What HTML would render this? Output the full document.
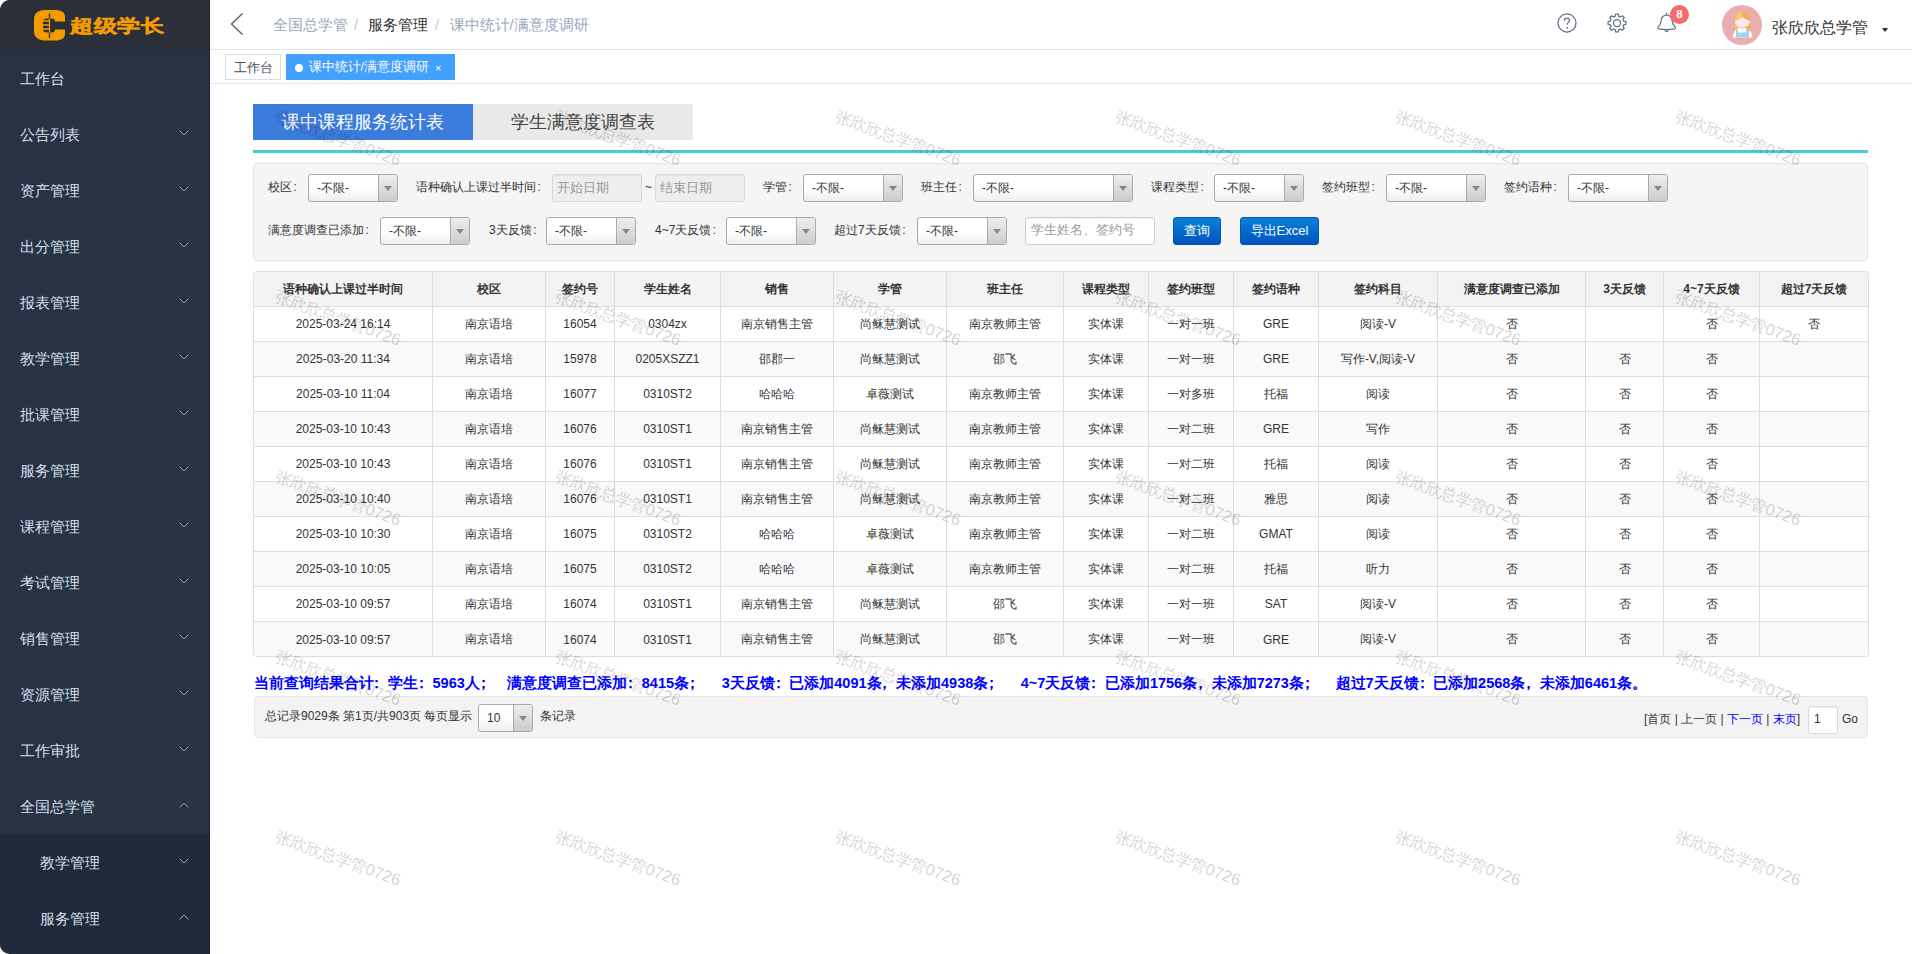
<!DOCTYPE html>
<html><head><meta charset="utf-8">
<style>
*{box-sizing:border-box;margin:0;padding:0}
html,body{width:1912px;height:954px;overflow:hidden;background:#fff;font-family:"Liberation Sans",sans-serif;color:#333;position:relative}
.abs{position:absolute}
.bc{top:16px;font-size:14.5px;line-height:18px;white-space:nowrap}
#side{position:absolute;left:0;top:0;width:210px;height:954px;background:#263345;border-radius:10px 0 0 10px;overflow:hidden}
#logo{position:absolute;left:0;top:0;width:210px;height:50px;background:#2b2f3a}
.mi{position:absolute;left:0;width:210px;height:56px;line-height:58px;font-size:14.5px;color:#d6dee8;padding-left:20px}
.mi.sub{padding-left:40px}
.chev{position:absolute;left:179px;top:24px;width:10px;height:6px}
#sub{position:absolute;left:0;top:834px;width:210px;height:120px;background:#1f2a3a}
#hdr{position:absolute;left:210px;top:0;width:1702px;height:50px;border-bottom:1px solid #e6e6e6;background:#fff}
#tags{position:absolute;left:210px;top:50px;width:1702px;height:34px;border-bottom:1px solid #e6e6e6;background:#fff}
.tag{position:absolute;top:4px;height:26px;line-height:24px;font-size:12px;white-space:nowrap;border:1px solid #d8dce5;color:#495060;padding:0 8px;background:#fff}
.tag.act{background:#42a0ff;border-color:#42a0ff;color:#fff}
.ttab{position:absolute;top:104px;height:36px;line-height:36px;font-size:18px;text-align:center}
#teal{position:absolute;left:253px;top:150px;width:1615px;height:3px;background:#45ccd6}
#filt{position:absolute;left:253px;top:163px;width:1615px;height:98px;background:#f5f5f5;border:1px solid #e3e3e3;border-radius:4px}
.lb{position:absolute;font-size:12px;color:#333;line-height:14px;white-space:nowrap}
.sel{position:absolute;height:28px;border:1px solid #aaa;border-radius:3px;background:linear-gradient(#fff 50%,#eee);font-size:12px;line-height:26px;color:#333;padding-left:8px;white-space:nowrap}
.sel i{position:absolute;right:0;top:0;width:19px;height:26px;border-left:1px solid #aaa;background:linear-gradient(#eee,#ccc);border-radius:0 3px 3px 0}
.sel i:after{content:"";position:absolute;left:5px;top:11px;border-left:4px solid transparent;border-right:4px solid transparent;border-top:5px solid #888}
.date{position:absolute;height:28px;border:1px solid #d9d9d9;border-radius:3px;background:#eee;font-size:12px;line-height:25px;color:#999;padding-left:4px;box-shadow:inset 0 1px 1px rgba(0,0,0,0.06)}
.btn{position:absolute;top:217px;height:28px;border-radius:3px;background:linear-gradient(#0a82d8,#0053c0);border:1px solid #0058b8;color:#fff;font-size:13px;line-height:26px;text-align:center}
#tw{position:absolute;left:253px;top:271px;width:1616px;height:386px;border:1px solid #ddd;border-radius:4px;overflow:hidden}
table{width:1614px;border-collapse:separate;border-spacing:0;font-size:12px;table-layout:fixed}
tr:last-child td{border-bottom:0}
td:last-child,th:last-child{border-right:0}
td,th{height:35px;border-right:1px solid #ddd;border-bottom:1px solid #ddd;text-align:center;color:#333;white-space:nowrap;overflow:hidden}
th{background:#f3f3f3;font-weight:bold}
tr:nth-child(odd) td{background:#f9f9f9}
.sum{position:absolute;top:675px;font-size:14.5px;font-weight:bold;color:#0000ff;white-space:pre;line-height:16px}
.pc{display:inline-block;width:1em;text-indent:-0.28em}
#pg{position:absolute;left:254px;top:696px;width:1614px;height:42px;background:#f3f3f3;border:1px solid #e5e5e5;border-radius:4px}
.wm{position:absolute;font-size:16.4px;color:rgba(0,0,0,0.19);transform:rotate(19.8deg);transform-origin:0 0;white-space:nowrap;pointer-events:none}
</style></head><body>
<div id="side"><div id="logo">
<svg class="abs" style="left:34px;top:10px" width="32" height="31" viewBox="0 0 32 31">
<path fill="#f39c00" fill-rule="evenodd" d="M11 0 H21 C27 0 31 2 31 7 V11.5 H21 C21 9.5 20 8.5 18 8.5 H13 C10.5 8.5 9 9.5 9 12 V19 C9 21.5 10.5 22.5 13 22.5 H18 C20 22.5 21 21.5 21 19.5 H31 V23.5 C31 28.5 27 30.5 21 30.5 H11 C4 30.5 0 27 0 21 V9.5 C0 3.5 4 0 11 0 Z"/>
<path stroke="#2b2f3a" stroke-width="1.3" fill="none" d="M15.5 3.5 V28 M9 11.5 H15 M9 15.5 H15 M9 19.5 H15"/>
<path stroke="#f39c00" stroke-width="1.3" fill="none" d="M15.5 8.5 V22.5 M9 11 H15.5 M9 15 H15.5 M9 19 H15.5"/>
</svg>
<div class="abs" style="left:70px;top:9.5px;font-size:23.5px;font-weight:bold;color:#f39c00;-webkit-text-stroke:0.6px #f39c00;line-height:32px;letter-spacing:-0.3px;transform:scaleY(0.78);transform-origin:0 50%;white-space:nowrap">超级学长</div>
</div>
<div id="sub"></div>
<div class="mi" style="top:50px">工作台</div>
<div class="mi" style="top:106px">公告列表<svg class="chev" viewBox="0 0 10 6"><path d="M0.5 0.5 L5 5 L9.5 0.5" fill="none" stroke="#909aa8" stroke-width="1"/></svg></div>
<div class="mi" style="top:162px">资产管理<svg class="chev" viewBox="0 0 10 6"><path d="M0.5 0.5 L5 5 L9.5 0.5" fill="none" stroke="#909aa8" stroke-width="1"/></svg></div>
<div class="mi" style="top:218px">出分管理<svg class="chev" viewBox="0 0 10 6"><path d="M0.5 0.5 L5 5 L9.5 0.5" fill="none" stroke="#909aa8" stroke-width="1"/></svg></div>
<div class="mi" style="top:274px">报表管理<svg class="chev" viewBox="0 0 10 6"><path d="M0.5 0.5 L5 5 L9.5 0.5" fill="none" stroke="#909aa8" stroke-width="1"/></svg></div>
<div class="mi" style="top:330px">教学管理<svg class="chev" viewBox="0 0 10 6"><path d="M0.5 0.5 L5 5 L9.5 0.5" fill="none" stroke="#909aa8" stroke-width="1"/></svg></div>
<div class="mi" style="top:386px">批课管理<svg class="chev" viewBox="0 0 10 6"><path d="M0.5 0.5 L5 5 L9.5 0.5" fill="none" stroke="#909aa8" stroke-width="1"/></svg></div>
<div class="mi" style="top:442px">服务管理<svg class="chev" viewBox="0 0 10 6"><path d="M0.5 0.5 L5 5 L9.5 0.5" fill="none" stroke="#909aa8" stroke-width="1"/></svg></div>
<div class="mi" style="top:498px">课程管理<svg class="chev" viewBox="0 0 10 6"><path d="M0.5 0.5 L5 5 L9.5 0.5" fill="none" stroke="#909aa8" stroke-width="1"/></svg></div>
<div class="mi" style="top:554px">考试管理<svg class="chev" viewBox="0 0 10 6"><path d="M0.5 0.5 L5 5 L9.5 0.5" fill="none" stroke="#909aa8" stroke-width="1"/></svg></div>
<div class="mi" style="top:610px">销售管理<svg class="chev" viewBox="0 0 10 6"><path d="M0.5 0.5 L5 5 L9.5 0.5" fill="none" stroke="#909aa8" stroke-width="1"/></svg></div>
<div class="mi" style="top:666px">资源管理<svg class="chev" viewBox="0 0 10 6"><path d="M0.5 0.5 L5 5 L9.5 0.5" fill="none" stroke="#909aa8" stroke-width="1"/></svg></div>
<div class="mi" style="top:722px">工作审批<svg class="chev" viewBox="0 0 10 6"><path d="M0.5 0.5 L5 5 L9.5 0.5" fill="none" stroke="#909aa8" stroke-width="1"/></svg></div>
<div class="mi" style="top:778px">全国总学管<svg class="chev" viewBox="0 0 10 6"><path d="M0.5 5.5 L5 1 L9.5 5.5" fill="none" stroke="#909aa8" stroke-width="1"/></svg></div>
<div class="mi sub" style="top:834px">教学管理<svg class="chev" viewBox="0 0 10 6"><path d="M0.5 0.5 L5 5 L9.5 0.5" fill="none" stroke="#909aa8" stroke-width="1"/></svg></div>
<div class="mi sub" style="top:890px">服务管理<svg class="chev" viewBox="0 0 10 6"><path d="M0.5 5.5 L5 1 L9.5 5.5" fill="none" stroke="#909aa8" stroke-width="1"/></svg></div>
<div style="position:absolute;left:209px;top:0;width:1px;height:954px;background:rgba(0,0,0,0.22)"></div></div>
<div id="hdr">
<svg class="abs" style="left:20px;top:12px" width="14" height="24" viewBox="0 0 14 24"><path d="M12.5 1.5 L1.5 12 L12.5 22.5" fill="none" stroke="#666" stroke-width="1.5"/></svg>
<div class="abs bc" style="left:63px;color:#97a8be">全国总学管</div><div class="abs bc" style="left:144px;color:#c0c4cc">/</div><div class="abs bc" style="left:158px;color:#303133">服务管理</div><div class="abs bc" style="left:225px;color:#c0c4cc">/</div><div class="abs bc" style="left:239.5px;color:#97a8be">课中统计/满意度调研</div>
<svg class="abs" style="left:1346px;top:12px" width="22" height="22" viewBox="0 0 22 22"><circle cx="11" cy="11" r="9" fill="none" stroke="#627180" stroke-width="1.25"/><path d="M8.4 8.7 C8.4 7 9.5 6.1 11 6.1 C12.5 6.1 13.6 7 13.6 8.5 C13.6 10.3 11.1 10.5 11.1 12.7" fill="none" stroke="#627180" stroke-width="1.3"/><circle cx="11.1" cy="15.8" r="0.9" fill="#627180"/></svg>
<svg class="abs" style="left:1396px;top:11.5px" width="22" height="22" viewBox="0 0 22 22"><path fill="none" stroke="#627180" stroke-width="1.25" stroke-linejoin="round" d="M17.67 9.23 L19.89 9.57 L19.89 12.43 L17.67 12.77 A6.9 6.9 0 0 1 16.97 14.46 L18.30 16.27 L16.27 18.30 L14.46 16.97 A6.9 6.9 0 0 1 12.77 17.67 L12.43 19.89 L9.57 19.89 L9.23 17.67 A6.9 6.9 0 0 1 7.54 16.97 L5.73 18.30 L3.70 16.27 L5.03 14.46 A6.9 6.9 0 0 1 4.33 12.77 L2.11 12.43 L2.11 9.57 L4.33 9.23 A6.9 6.9 0 0 1 5.03 7.54 L3.70 5.73 L5.73 3.70 L7.54 5.03 A6.9 6.9 0 0 1 9.23 4.33 L9.57 2.11 L12.43 2.11 L12.77 4.33 A6.9 6.9 0 0 1 14.46 5.03 L16.27 3.70 L18.30 5.73 L16.97 7.54 A6.9 6.9 0 0 1 17.67 9.23 Z"/><circle cx="11" cy="11" r="3.5" fill="none" stroke="#627180" stroke-width="1.25"/></svg>
<svg class="abs" style="left:1446px;top:12px" width="22" height="22" viewBox="0 0 22 22"><path fill="none" stroke="#627180" stroke-width="1.2" stroke-linejoin="round" stroke-linecap="round" d="M10.6 1.2 V3.1 M10.6 3.1 C7.3 3.1 5.1 5.5 5.1 8.8 C5.1 12 3.6 13.4 2.3 14.7 C1.3 15.8 1.9 17 3.6 17.2 C8 17.8 13.3 17.8 17.7 17.2 C19.4 17 20 15.8 19 14.7 C17.7 13.4 16.1 12 16.1 8.8 C16.1 5.5 13.9 3.1 10.6 3.1 Z M9.1 18.4 C9.5 20.1 11.8 20.1 12.2 18.4"/></svg>
<div class="abs" style="left:1460px;top:4.8px;width:19px;height:19px;border-radius:50%;background:#f56c6c;color:#fff;font-size:11.5px;font-weight:bold;text-align:center;line-height:19px">8</div>
<svg class="abs" style="left:1512px;top:5px" width="40" height="40" viewBox="0 0 40 40"><circle cx="20" cy="20" r="20" fill="#ebaeae"/><path d="M12.8 25.2 V14 C12.8 9.5 16 7 20.3 7 C24.6 7 28.2 9.5 28.2 14 V25.2 Z" fill="#f6c670"/><path d="M20.3 7 C24.6 7 28.2 9.5 28.2 14 V25.2 H20.3 Z" fill="#f0ae68"/><path d="M13 16.2 C15 15 18 14.2 20.3 12.3 C22.6 14.2 25.6 15 28 16.2 C28 19.8 24.6 22.6 20.5 22.6 C16.4 22.6 13 19.8 13 16.2 Z" fill="#fbe6e9"/><path d="M10.9 32.6 C10.9 27.5 13.5 24.5 16.5 23.8 H24 C27.5 24.5 30.3 27.5 30.3 32.6 Z" fill="#fff"/><path d="M13.9 32.6 V24.9 L16.5 23.8 H24 L27.1 24.9 V32.6 Z" fill="#a0d3f0"/><path d="M16 23.1 H24 V27.5 H16 Z" fill="#fff"/><path d="M20.3 23.6 V25.6" stroke="#8cc8ea" stroke-width="0.8"/></svg>
<div class="abs" style="left:1562px;top:17px;font-size:16.3px;line-height:20px;color:#303133;white-space:nowrap">张欣欣总学管</div>
<div class="abs" style="left:1671.5px;top:27.8px;width:0;height:0;border-left:3.7px solid transparent;border-right:3.7px solid transparent;border-top:4.5px solid #1f2d3d"></div>
</div>
<div id="tags"><div class="tag" style="left:15px;width:56px;font-size:12.5px;padding-left:8px;line-height:26px">工作台</div><div class="tag act" style="left:76px;width:169px;font-size:12.5px;padding-left:21.5px;line-height:25.5px"><span style="position:absolute;left:8px;top:8.5px;width:8px;height:8px;border-radius:50%;background:#fff"></span>课中统计/满意度调研<span style="position:absolute;left:148px;top:0.5px;font-size:11px">×</span></div></div>
<div class="ttab" style="left:253px;width:220px;background:#3a7bdc;color:#fff">课中课程服务统计表</div>
<div class="ttab" style="left:473px;width:220px;background:#e9e9e9;color:#444">学生满意度调查表</div>
<div id="teal"></div>
<div id="filt"></div>
<div class="lb" style="left:268px;top:180px">校区<span style="margin-left:1.5px">:</span></div>
<div class="sel" style="left:308px;top:174px;width:90px">-不限-<i></i></div>
<div class="lb" style="left:416px;top:180px">语种确认上课过半时间<span style="margin-left:1.5px">:</span></div>
<div class="date" style="left:552px;top:174px;width:90px;font-size:13px">开始日期</div>
<div class="lb" style="left:645px;top:180px">~</div>
<div class="date" style="left:655px;top:174px;width:90px;font-size:13px">结束日期</div>
<div class="lb" style="left:763px;top:180px">学管<span style="margin-left:1.5px">:</span></div>
<div class="sel" style="left:803px;top:174px;width:100px">-不限-<i></i></div>
<div class="lb" style="left:921px;top:180px">班主任<span style="margin-left:1.5px">:</span></div>
<div class="sel" style="left:973px;top:174px;width:160px">-不限-<i></i></div>
<div class="lb" style="left:1151px;top:180px">课程类型<span style="margin-left:1.5px">:</span></div>
<div class="sel" style="left:1214px;top:174px;width:90px">-不限-<i></i></div>
<div class="lb" style="left:1322px;top:180px">签约班型<span style="margin-left:1.5px">:</span></div>
<div class="sel" style="left:1386px;top:174px;width:100px">-不限-<i></i></div>
<div class="lb" style="left:1504px;top:180px">签约语种<span style="margin-left:1.5px">:</span></div>
<div class="sel" style="left:1568px;top:174px;width:100px">-不限-<i></i></div>
<div class="lb" style="left:268px;top:223px">满意度调查已添加<span style="margin-left:1.5px">:</span></div>
<div class="sel" style="left:380px;top:217px;width:90px">-不限-<i></i></div>
<div class="lb" style="left:489px;top:223px">3天反馈<span style="margin-left:1.5px">:</span></div>
<div class="sel" style="left:546px;top:217px;width:90px">-不限-<i></i></div>
<div class="lb" style="left:655px;top:223px">4~7天反馈<span style="margin-left:1.5px">:</span></div>
<div class="sel" style="left:726px;top:217px;width:90px">-不限-<i></i></div>
<div class="lb" style="left:834px;top:223px">超过7天反馈<span style="margin-left:1.5px">:</span></div>
<div class="sel" style="left:917px;top:217px;width:90px">-不限-<i></i></div>
<div class="date" style="left:1025px;top:217px;width:130px;background:#fff;border-color:#ccc;padding-left:5px;font-size:13px;line-height:24px">学生姓名、签约号</div>
<div class="btn" style="left:1173px;width:48px">查询</div>
<div class="btn" style="left:1240px;width:79px">导出Excel</div>
<div id="tw"><table><colgroup><col style="width:179px"><col style="width:113px"><col style="width:69px"><col style="width:106px"><col style="width:113px"><col style="width:113px"><col style="width:117px"><col style="width:85px"><col style="width:85px"><col style="width:85px"><col style="width:119px"><col style="width:148px"><col style="width:78px"><col style="width:96px"><col style="width:108px"></colgroup>
<tr><th>语种确认上课过半时间</th><th>校区</th><th>签约号</th><th>学生姓名</th><th>销售</th><th>学管</th><th>班主任</th><th>课程类型</th><th>签约班型</th><th>签约语种</th><th>签约科目</th><th>满意度调查已添加</th><th>3天反馈</th><th>4~7天反馈</th><th>超过7天反馈</th></tr>
<tr><td>2025-03-24 16:14</td><td>南京语培</td><td>16054</td><td>0304zx</td><td>南京销售主管</td><td>尚稣慧测试</td><td>南京教师主管</td><td>实体课</td><td>一对一班</td><td>GRE</td><td>阅读-V</td><td>否</td><td></td><td>否</td><td>否</td></tr>
<tr><td>2025-03-20 11:34</td><td>南京语培</td><td>15978</td><td>0205XSZZ1</td><td>邵郡一</td><td>尚稣慧测试</td><td>邵飞</td><td>实体课</td><td>一对一班</td><td>GRE</td><td>写作-V,阅读-V</td><td>否</td><td>否</td><td>否</td><td></td></tr>
<tr><td>2025-03-10 11:04</td><td>南京语培</td><td>16077</td><td>0310ST2</td><td>哈哈哈</td><td>卓薇测试</td><td>南京教师主管</td><td>实体课</td><td>一对多班</td><td>托福</td><td>阅读</td><td>否</td><td>否</td><td>否</td><td></td></tr>
<tr><td>2025-03-10 10:43</td><td>南京语培</td><td>16076</td><td>0310ST1</td><td>南京销售主管</td><td>尚稣慧测试</td><td>南京教师主管</td><td>实体课</td><td>一对二班</td><td>GRE</td><td>写作</td><td>否</td><td>否</td><td>否</td><td></td></tr>
<tr><td>2025-03-10 10:43</td><td>南京语培</td><td>16076</td><td>0310ST1</td><td>南京销售主管</td><td>尚稣慧测试</td><td>南京教师主管</td><td>实体课</td><td>一对二班</td><td>托福</td><td>阅读</td><td>否</td><td>否</td><td>否</td><td></td></tr>
<tr><td>2025-03-10 10:40</td><td>南京语培</td><td>16076</td><td>0310ST1</td><td>南京销售主管</td><td>尚稣慧测试</td><td>南京教师主管</td><td>实体课</td><td>一对二班</td><td>雅思</td><td>阅读</td><td>否</td><td>否</td><td>否</td><td></td></tr>
<tr><td>2025-03-10 10:30</td><td>南京语培</td><td>16075</td><td>0310ST2</td><td>哈哈哈</td><td>卓薇测试</td><td>南京教师主管</td><td>实体课</td><td>一对二班</td><td>GMAT</td><td>阅读</td><td>否</td><td>否</td><td>否</td><td></td></tr>
<tr><td>2025-03-10 10:05</td><td>南京语培</td><td>16075</td><td>0310ST2</td><td>哈哈哈</td><td>卓薇测试</td><td>南京教师主管</td><td>实体课</td><td>一对二班</td><td>托福</td><td>听力</td><td>否</td><td>否</td><td>否</td><td></td></tr>
<tr><td>2025-03-10 09:57</td><td>南京语培</td><td>16074</td><td>0310ST1</td><td>南京销售主管</td><td>尚稣慧测试</td><td>邵飞</td><td>实体课</td><td>一对一班</td><td>SAT</td><td>阅读-V</td><td>否</td><td>否</td><td>否</td><td></td></tr>
<tr><td>2025-03-10 09:57</td><td>南京语培</td><td>16074</td><td>0310ST1</td><td>南京销售主管</td><td>尚稣慧测试</td><td>邵飞</td><td>实体课</td><td>一对一班</td><td>GRE</td><td>阅读-V</td><td>否</td><td>否</td><td>否</td><td></td></tr>
</table></div>
<div class="sum" style="left:253.5px">当前查询结果合计<span class="pc">：</span>学生<span class="pc">：</span>5963人<span class="pc">；</span></div>
<div class="sum" style="left:507.3px">满意度调查已添加<span class="pc">：</span>8415条<span class="pc">；</span></div>
<div class="sum" style="left:721.7px">3天反馈<span class="pc">：</span>已添加4091条<span class="pc">，</span>未添加4938条<span class="pc">；</span></div>
<div class="sum" style="left:1020.8px">4~7天反馈<span class="pc">：</span>已添加1756条<span class="pc">，</span>未添加7273条<span class="pc">；</span></div>
<div class="sum" style="left:1335.5px">超过7天反馈<span class="pc">：</span>已添加2568条<span class="pc">，</span>未添加6461条。</div>
<div id="pg"></div>
<div class="lb" style="left:265px;top:709px">总记录9029条 第1页/共903页 每页显示</div>
<div class="sel" style="left:478px;top:704px;width:55px">10<i></i></div>
<div class="lb" style="left:540px;top:709px">条记录</div>
<div class="lb" style="left:1644px;top:712px">[首页 | 上一页 | <span style="color:#00f">下一页</span> | <span style="color:#00f">末页</span>]</div>
<div class="date" style="left:1808px;top:706px;width:30px;background:#fff;color:#333;padding-left:5px">1</div>
<div class="lb" style="left:1842px;top:712px">Go</div>
<div class="wm" style="left:279px;top:105.5px">张欣欣总学管0726</div>
<div class="wm" style="left:559px;top:105.5px">张欣欣总学管0726</div>
<div class="wm" style="left:839px;top:105.5px">张欣欣总学管0726</div>
<div class="wm" style="left:1119px;top:105.5px">张欣欣总学管0726</div>
<div class="wm" style="left:1399px;top:105.5px">张欣欣总学管0726</div>
<div class="wm" style="left:1679px;top:105.5px">张欣欣总学管0726</div>
<div class="wm" style="left:279px;top:285.5px">张欣欣总学管0726</div>
<div class="wm" style="left:559px;top:285.5px">张欣欣总学管0726</div>
<div class="wm" style="left:839px;top:285.5px">张欣欣总学管0726</div>
<div class="wm" style="left:1119px;top:285.5px">张欣欣总学管0726</div>
<div class="wm" style="left:1399px;top:285.5px">张欣欣总学管0726</div>
<div class="wm" style="left:1679px;top:285.5px">张欣欣总学管0726</div>
<div class="wm" style="left:279px;top:465.5px">张欣欣总学管0726</div>
<div class="wm" style="left:559px;top:465.5px">张欣欣总学管0726</div>
<div class="wm" style="left:839px;top:465.5px">张欣欣总学管0726</div>
<div class="wm" style="left:1119px;top:465.5px">张欣欣总学管0726</div>
<div class="wm" style="left:1399px;top:465.5px">张欣欣总学管0726</div>
<div class="wm" style="left:1679px;top:465.5px">张欣欣总学管0726</div>
<div class="wm" style="left:279px;top:645.5px">张欣欣总学管0726</div>
<div class="wm" style="left:559px;top:645.5px">张欣欣总学管0726</div>
<div class="wm" style="left:839px;top:645.5px">张欣欣总学管0726</div>
<div class="wm" style="left:1119px;top:645.5px">张欣欣总学管0726</div>
<div class="wm" style="left:1399px;top:645.5px">张欣欣总学管0726</div>
<div class="wm" style="left:1679px;top:645.5px">张欣欣总学管0726</div>
<div class="wm" style="left:279px;top:825.5px">张欣欣总学管0726</div>
<div class="wm" style="left:559px;top:825.5px">张欣欣总学管0726</div>
<div class="wm" style="left:839px;top:825.5px">张欣欣总学管0726</div>
<div class="wm" style="left:1119px;top:825.5px">张欣欣总学管0726</div>
<div class="wm" style="left:1399px;top:825.5px">张欣欣总学管0726</div>
<div class="wm" style="left:1679px;top:825.5px">张欣欣总学管0726</div>
</body></html>
